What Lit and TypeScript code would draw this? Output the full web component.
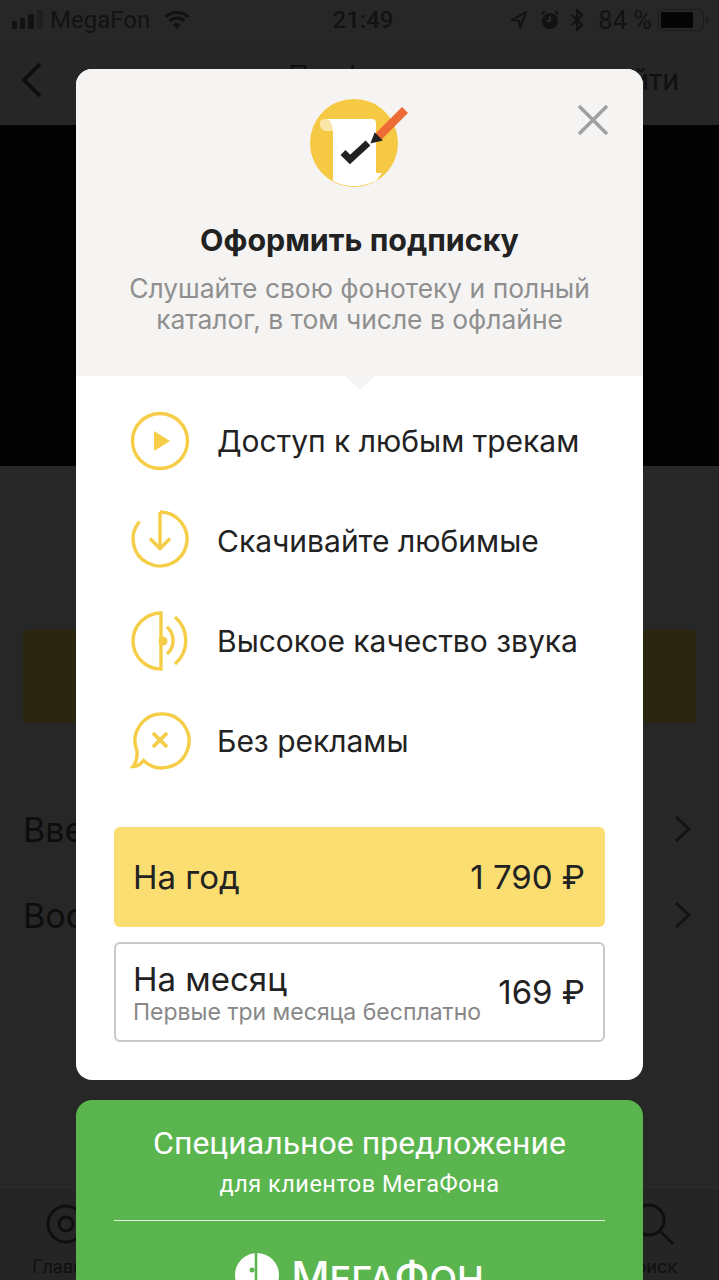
import { html, css, LitElement } from 'lit'
import { customElement } from 'lit/decorators.js'

const Y = '#f5cd47'

const playIcon = html`<svg width="64" height="64" viewBox="128 409 64 64" fill="none" stroke=${Y} stroke-width="3.4">
    <circle cx="160" cy="441" r="27.5" />
    <path d="M154 431L170 441L154 451Z" fill=${Y} stroke="none" />
</svg>`

const downloadIcon = html`<svg width="64" height="64" viewBox="128 509 64 64" fill="none" stroke=${Y} stroke-width="3.4">
    <path d="M160 512A27 27 0 1 1 139.500 521.500" />
    <path d="M160 512V548M150 538.500L160 548.500L170 538.500" />
</svg>`

const soundIcon = html`<svg width="64" height="64" viewBox="128 609 64 64" fill="none" stroke=${Y} stroke-width="3.4">
    <path d="M161 613A28 28 0 0 0 161 669Z" />
    <circle cx="163" cy="641" r="4.500" fill=${Y} stroke="none" />
    <path d="M167 627A18 18 0 0 1 167 654" />
    <path d="M175 617A31 31 0 0 1 175 664" />
</svg>`

const adIcon = html`<svg width="64" height="64" viewBox="128 710 64 64" fill="none" stroke=${Y} stroke-width="3.4">
    <path d="M143.500 761.500A27 27 0 1 0 137 752C137.500 758 136 764 133 767.500C137 767.500 141 765 143.500 761.500Z" />
    <path d="M153 734L167 748M167 734L153 748" stroke-width="3.800" />
</svg>`

const features = [
    { icon: playIcon, label: 'Доступ к любым трекам' },
    { icon: downloadIcon, label: 'Скачивайте любимые' },
    { icon: soundIcon, label: 'Высокое качество звука' },
    { icon: adIcon, label: 'Без рекламы' },
]

@customElement('app-root')
export class AppRoot extends LitElement {
    static styles = css`
        :host {
            display: block;
            position: relative;
            width: 719px;
            height: 1280px;
            overflow: hidden;
            background: #272727;
            font-family: Inter, 'Liberation Sans', sans-serif;
        }

        /* page behind the dialog */
        .status {
            height: 40px;
            display: flex;
            align-items: center;
            padding: 0 11px 0 12px;
            color: #121212;
            font-family: Roboto, sans-serif;
            font-size: 24px;
        }
        .status-left,
        .status-right {
            flex: 1;
            display: flex;
            align-items: center;
        }
        .carrier {
            margin: 0 14px 0 6px;
        }
        .status-right {
            justify-content: flex-end;
        }
        .alarm {
            margin: 0 12px 0 14px;
        }
        .percent {
            margin: 0 6px 0 15px;
            font-size: 25.500px;
        }
        .clock {
            font-weight: 500;
            font-size: 24px;
            margin-left: 6px;
        }
        .nav {
            height: 85px;
            box-sizing: border-box;
            position: relative;
            display: flex;
            align-items: center;
            justify-content: space-between;
            padding: 0 40px 6px 20px;
            color: #0f0f0f;
            font-size: 28px;
            background: #262626;
        }
        .nav-title {
            position: absolute;
            left: 288px;
            top: 19px;
        }
        .hero {
            height: 341px;
            background: #020202;
        }
        .back-body {
            height: 721px;
            padding: 164px 23px 0;
            box-sizing: border-box;
        }
        .banner {
            height: 93px;
            border-radius: 4px;
            background: #2b2610;
        }
        .back-rows {
            margin-top: 85px;
            display: flex;
            flex-direction: column;
            gap: 44px;
            color: #0d0d0d;
            font-size: 34px;
        }
        .back-row {
            height: 42px;
            display: flex;
            align-items: center;
            justify-content: space-between;
            padding-right: 4px;
        }
        .tabs {
            height: 93px;
            border-top: 1px solid #2d2d2d;
            box-sizing: border-box;
            display: flex;
            justify-content: space-between;
            padding: 14px 42px 0 32px;
            color: #0f0f0f;
            font-size: 18px;
            background: #252525;
        }
        .tab {
            display: flex;
            flex-direction: column;
            gap: 10px;
        }
        .tab.end {
            align-items: flex-end;
        }

        /* dialog */
        .overlay {
            position: absolute;
            left: 76px;
            top: 69px;
            width: 567px;
            display: flex;
            flex-direction: column;
            gap: 20px;
        }
        .modal {
            position: relative;
            height: 1011px;
            border-radius: 16px;
            background: #fff;
            overflow: hidden;
        }
        .head {
            height: 307px;
            box-sizing: border-box;
            background: #f5f4f2;
            display: flex;
            flex-direction: column;
            align-items: center;
            padding-top: 28px;
            position: relative;
        }
        .head::after {
            content: '';
            position: absolute;
            left: 269px;
            bottom: -14px;
            border-style: solid;
            border-width: 14px 15px 0;
            border-color: #f5f4f2 transparent transparent;
        }
        .close {
            position: absolute;
            right: 34px;
            top: 35px;
        }
        .head h1 {
            margin: 33px 0 0;
            font-size: 30.400px;
            line-height: 36px;
            font-weight: 700;
            color: #222;
        }
        .head p {
            margin: 15px 0 0;
            width: 490px;
            text-align: center;
            font-size: 26.400px;
            line-height: 31px;
            color: #8f8f8f;
        }
        .features {
            display: flex;
            flex-direction: column;
            gap: 36px;
            padding: 33px 0 0 52px;
        }
        .feature {
            height: 64px;
            display: flex;
            align-items: center;
            gap: 25px;
            font-size: 30px;
            color: #222;
            white-space: nowrap;
        }
        .plans {
            display: flex;
            flex-direction: column;
            gap: 15px;
            margin: 54px 38px 0;
        }
        .plan {
            height: 100px;
            box-sizing: border-box;
            border-radius: 6px;
            display: flex;
            align-items: center;
            justify-content: space-between;
            padding: 0 20px 0 19px;
            font-size: 33px;
            color: #222;
            white-space: nowrap;
        }
        .plan.year {
            background: #fade72;
        }
        .plan.month {
            border: 2px solid #c9c9c9;
            padding: 0 18px 0 17px;
        }
        .plan small {
            display: block;
            font-size: 23px;
            line-height: 26px;
            color: #878787;
        }
        .plan .name {
            line-height: 40px;
        }

        /* offer */
        .offer {
            height: 200px;
            flex: none;
            border-radius: 16px 16px 0 0;
            background: #5bb54f;
            color: #fff;
            font-family: Roboto, sans-serif;
            text-align: center;
            padding: 24px 38px 0;
            box-sizing: border-box;
        }
        .offer-title {
            font-size: 32px;
            line-height: 38px;
        }
        .offer-sub {
            margin-top: 8px;
            font-size: 23.500px;
            line-height: 28px;
            letter-spacing: 0.5px;
        }
        .offer hr {
            margin: 22px 0 0;
            border: none;
            height: 1px;
            background: #e4f3e1;
        }
        .logo {
            margin-top: 31px;
            display: flex;
            justify-content: center;
            align-items: flex-start;
            gap: 12px;
            font-family: Inter, sans-serif;
            font-size: 36px;
            line-height: 50px;
            font-weight: 500;
            white-space: nowrap;
        }
        .logo b {
            font-size: 42px;
            font-weight: 500;
        }
    `

    render() {
        return html`
            <div class="status">
                <div class="status-left">
                    <svg width="32" height="20" viewBox="0 0 32 20" fill="#121212">
                        <rect x="0" y="11" width="5" height="8" rx="1" />
                        <rect x="8" y="8" width="5" height="11" rx="1" />
                        <rect x="16" y="4" width="6" height="15" rx="1" />
                        <rect x="25" y="0" width="6" height="19" rx="1" fill="#1f1f1f" />
                    </svg>
                    <span class="carrier">MegaFon</span>
                    <svg width="26" height="20" viewBox="0 0 26 20" fill="none" stroke="#121212" stroke-width="3">
                        <path d="M1.500 7C8 1 18 1 24.500 7M5.500 11C10 7 16 7 20.500 11" />
                        <path d="M9 14.500C11.500 12.500 14.500 12.500 17 14.500L13 19Z" fill="#121212" stroke="none" />
                    </svg>
                </div>
                <span class="clock">21:49</span>
                <div class="status-right">
                    <svg width="16" height="18" viewBox="0 0 16 18" fill="none" stroke="#121212" stroke-width="2">
                        <path d="M15 1L1 9L8 10L9 17Z" />
                    </svg>
                    <svg class="alarm" width="18" height="20" viewBox="0 0 18 20" fill="#121212">
                        <circle cx="9" cy="11" r="8" />
                        <path d="M1 4L4 1M17 4L14 1" stroke="#121212" stroke-width="2" />
                        <path d="M9 6V11H6" fill="none" stroke="#333" stroke-width="1.500" />
                    </svg>
                    <svg width="12" height="22" viewBox="0 0 12 22" fill="none" stroke="#121212" stroke-width="2">
                        <path d="M1 6L11 16L6 21V1L11 6L1 16" />
                    </svg>
                    <span class="percent">84 %</span>
                    <svg width="50" height="22" viewBox="0 0 50 22">
                        <rect x="0.500" y="0.500" width="45" height="21" rx="5" fill="none" stroke="#1b1b1b" />
                        <rect x="3" y="3" width="32" height="16" rx="2" fill="#050505" />
                        <rect x="48" y="8" width="2" height="6" fill="#1b1b1b" />
                    </svg>
                </div>
            </div>
            <div class="nav">
                <svg width="24" height="36" viewBox="0 0 24 36" fill="none" stroke="#0d0d0d" stroke-width="3.500">
                    <path d="M20 2L4 18L20 34" />
                </svg>
                <span class="nav-title">Профиль</span>
                <span>Войти</span>
            </div>
            <div class="hero"></div>
            <div class="back-body">
                <div class="banner"></div>
                <div class="back-rows">
                    <div class="back-row">
                        <span>Ввести промокод</span>
                        <svg width="18" height="28" viewBox="0 0 18 28" fill="none" stroke="#131313" stroke-width="3">
                            <path d="M2 2L15 14L2 26" />
                        </svg>
                    </div>
                    <div class="back-row">
                        <span>Восстановить</span>
                        <svg width="18" height="28" viewBox="0 0 18 28" fill="none" stroke="#131313" stroke-width="3">
                            <path d="M2 2L15 14L2 26" />
                        </svg>
                    </div>
                </div>
            </div>
            <div class="tabs">
                <div class="tab">
                    <svg width="44" height="44" viewBox="0 0 44 44" fill="none" stroke="#0f0f0f" stroke-width="3">
                        <circle cx="34" cy="22" r="18" />
                        <circle cx="34" cy="22" r="7" />
                    </svg>
                    <span>Главная</span>
                </div>
                <div class="tab end">
                    <svg width="44" height="44" viewBox="0 0 44 44" fill="none" stroke="#0f0f0f" stroke-width="3">
                        <circle cx="16" cy="18" r="15" />
                        <path d="M27 29L40 42" />
                    </svg>
                    <span>Поиск</span>
                </div>
            </div>

            <div class="overlay">
                <div class="modal">
                    <div class="head">
                        <svg width="100" height="92" viewBox="310 96 100 92">
                            <circle cx="354" cy="142" r="44" fill="#f6c944" />
                            <path d="M320 122Q320 118 325 118H340V130H326Q320 130 320 122Z" fill="#f9e5a8" />
                            <path d="M333 130Q332 118 326 118H372Q376 118 376 122V172L382 172L376 180Q365 185 354 185Q342 185 333 180Z" fill="#fff" />
                            <path d="M377 137L405 109" stroke="#ee6b35" stroke-width="8.500" />
                            <path d="M372 141L381 139L375 133Z" fill="#222" stroke="#222" stroke-width="2" />
                            <path d="M343 151.500L350 158.500L368 142" fill="none" stroke="#222" stroke-width="7" />
                        </svg>
                        <svg class="close" width="32" height="32" viewBox="0 0 32 32" stroke="#a0a0a0" stroke-width="3.500">
                            <path d="M2 2L30 30M30 2L2 30" />
                        </svg>
                        <h1>Оформить подписку</h1>
                        <p>Слушайте свою фонотеку и полный каталог, в том числе в офлайне</p>
                    </div>
                    <div class="features">
                        ${features.map((f) => html`<div class="feature">${f.icon}<span>${f.label}</span></div>`)}
                    </div>
                    <div class="plans">
                        <div class="plan year">
                            <span>На год</span>
                            <span>1 790 ₽</span>
                        </div>
                        <div class="plan month">
                            <div>
                                <div class="name">На месяц</div>
                                <small>Первые три месяца бесплатно</small>
                            </div>
                            <span>169 ₽</span>
                        </div>
                    </div>
                </div>
                <div class="offer">
                    <div class="offer-title">Специальное предложение</div>
                    <div class="offer-sub">для клиентов МегаФона</div>
                    <hr />
                    <div class="logo">
                        <svg width="44" height="46" viewBox="0 0 44 46">
                            <circle cx="22" cy="23" r="22" fill="#fff" />
                            <path d="M21 0V30Q21 36 16 38" fill="none" stroke="#5bb54f" stroke-width="2.500" />
                            <circle cx="17" cy="18" r="2.500" fill="#5bb54f" />
                        </svg>
                        <span><b>М</b>ЕГА<b>Ф</b>ОН</span>
                    </div>
                </div>
            </div>
        `
    }
}
